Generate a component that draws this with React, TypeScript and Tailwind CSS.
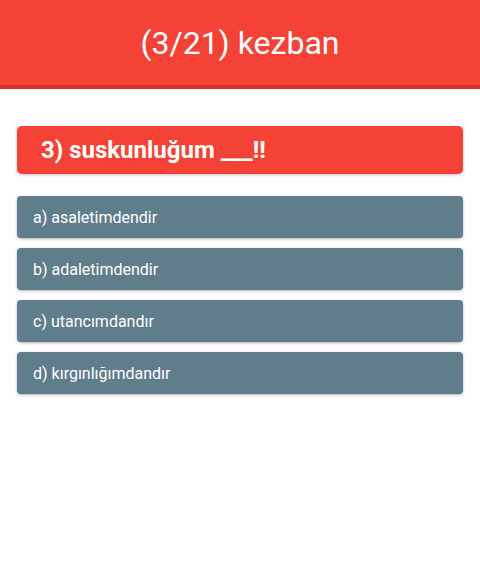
import React from 'react';

const options = ['a) asaletimdendir', 'b) adaletimdendir', 'c) utancımdandır', 'd) kırgınlığımdandır'];

const App: React.FC = () => {
  return (
    <div className="w-[480px] h-[583px] bg-white font-['Roboto',sans-serif]">
      <header className="h-[89px] bg-[#f44336] border-b-4 border-[#d9302c] flex items-center justify-center">
        <h1 className="text-white text-[32px] leading-none">(3/21) kezban</h1>
      </header>

      <div className="px-[17px] pt-[37px]">
        <div className="h-[48px] rounded-[5px] bg-[#f44336] shadow-[0_1px_3px_rgba(0,0,0,0.25)] flex items-center pl-[24px]">
          <span className="text-white font-bold text-[24px] leading-none">3) suskunluğum ___!!</span>
        </div>

        <div className="mt-[22px] flex flex-col gap-[10px]">
          {options.map((o) => (
            <button
              key={o}
              className="h-[42px] rounded-[4px] bg-[#607d8b] shadow-[0_1px_3px_rgba(0,0,0,0.3)] flex items-center pl-[16px] text-left"
            >
              <span className="text-white text-[16px] leading-none pt-[1px]">{o}</span>
            </button>
          ))}
        </div>
      </div>
    </div>
  );
};

export default App;
